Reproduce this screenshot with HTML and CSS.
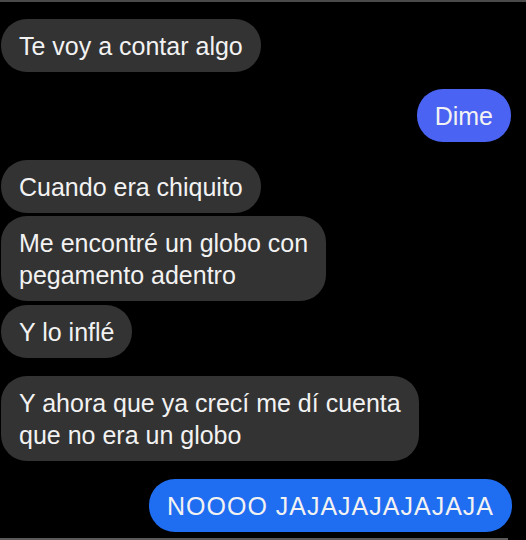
FILE: index.html
```html
<!DOCTYPE html>
<html lang="es">
<head>
<meta charset="utf-8">
<link rel="stylesheet" href="styles.css">
</head>
<body>
<div class="screen">
  <div class="chat">
    <div class="msg in">Te voy a contar algo</div>
    <div class="msg out dime gap-first">Dime</div>
    <div class="msg in gap-big">Cuando era chiquito</div>
    <div class="msg in gap-small">Me encontré un globo con<br>pegamento adentro</div>
    <div class="msg in gap-small2">Y lo inflé</div>
    <div class="msg in gap-big">Y ahora que ya crecí me dí cuenta<br>que no era un globo</div>
    <div class="msg out last gap-big">NOOOO JAJAJAJAJAJAJA</div>
  </div>
  <div class="bottom-line"></div>
</div>
</body>
</html>
```

FILE: styles.css
```css
html, body {
  margin: 0;
  padding: 0;
  background: #000;
}
.screen {
  width: 526px;
  height: 540px;
  background: #000;
  border-top: 2px solid #4a4a4a;
  box-sizing: border-box;
  display: flex;
  flex-direction: column;
  overflow: hidden;
}
.chat {
  flex: 1;
  display: flex;
  flex-direction: column;
  align-items: flex-start;
  padding: 17px 14px 0 1px;
}
.msg {
  font-family: "Liberation Sans", Arial, sans-serif;
  font-size: 25px;
  line-height: 32px;
  color: #f2f2f2;
  background: #333333;
  border-radius: 26px;
  padding: 11px 18px 10px 18px;
  white-space: nowrap;
}
.msg.out {
  align-self: flex-end;
}
.dime {
  background: #4a63f3;
  margin-right: 1px;
}
.last {
  background: #1f6df1;
  letter-spacing: 1px;
}
.gap-first { margin-top: 17px; }
.gap-big { margin-top: 18px; }
.gap-small { margin-top: 3px; }
.gap-small2 { margin-top: 4px; }
.bottom-line {
  height: 2px;
  width: 508px;
  background: #5a5a5a;
}
```
